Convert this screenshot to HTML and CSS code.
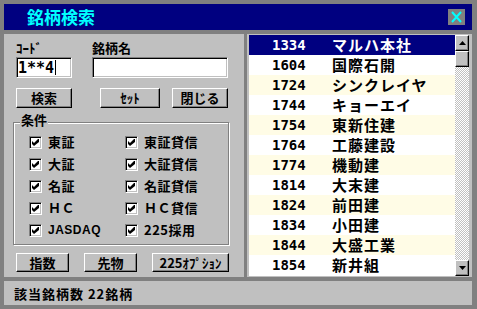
FILE: index.html
```
<!DOCTYPE html>
<html lang="ja">
<head>
<meta charset="utf-8">
<title>銘柄検索</title>
<link rel="stylesheet" href="styles.css">
</head>
<body>
<div class="window">
  <div class="titlebar">
    <span class="title">銘柄検索</span>
    <span class="close"><svg width="17" height="16" viewBox="0 0 17 16"><path d="M4 3L13 13M13 3L4 13" stroke="#00ffff" stroke-width="2" fill="none"/></svg></span>
  </div>
  <div class="body">
    <div class="left">
      <div class="fields">
        <div class="field code-field">
          <div class="label">ｺｰﾄﾞ</div>
          <div class="input"><span class="val">1**4</span><span class="caret"></span></div>
        </div>
        <div class="field name-field">
          <div class="label">銘柄名</div>
          <div class="input"></div>
        </div>
      </div>
      <div class="btnrow top-btns">
        <div class="btn b-search">検索</div>
        <div class="btn b-set">ｾｯﾄ</div>
        <div class="btn b-close">閉じる</div>
      </div>
      <div class="group">
        <div class="legend">条件</div>
        <div class="checks">
          <div class="chk"><span class="box"><svg width="7" height="7" viewBox="0 0 7 7"><path d="M0 2L2 4L6 0L7 0L7 3L2 7L0 5Z" fill="#000"/></svg></span>東証</div>
          <div class="chk"><span class="box"><svg width="7" height="7" viewBox="0 0 7 7"><path d="M0 2L2 4L6 0L7 0L7 3L2 7L0 5Z" fill="#000"/></svg></span>東証貸信</div>
          <div class="chk"><span class="box"><svg width="7" height="7" viewBox="0 0 7 7"><path d="M0 2L2 4L6 0L7 0L7 3L2 7L0 5Z" fill="#000"/></svg></span>大証</div>
          <div class="chk"><span class="box"><svg width="7" height="7" viewBox="0 0 7 7"><path d="M0 2L2 4L6 0L7 0L7 3L2 7L0 5Z" fill="#000"/></svg></span>大証貸信</div>
          <div class="chk"><span class="box"><svg width="7" height="7" viewBox="0 0 7 7"><path d="M0 2L2 4L6 0L7 0L7 3L2 7L0 5Z" fill="#000"/></svg></span>名証</div>
          <div class="chk"><span class="box"><svg width="7" height="7" viewBox="0 0 7 7"><path d="M0 2L2 4L6 0L7 0L7 3L2 7L0 5Z" fill="#000"/></svg></span>名証貸信</div>
          <div class="chk"><span class="box"><svg width="7" height="7" viewBox="0 0 7 7"><path d="M0 2L2 4L6 0L7 0L7 3L2 7L0 5Z" fill="#000"/></svg></span>ＨＣ</div>
          <div class="chk"><span class="box"><svg width="7" height="7" viewBox="0 0 7 7"><path d="M0 2L2 4L6 0L7 0L7 3L2 7L0 5Z" fill="#000"/></svg></span>ＨＣ貸信</div>
          <div class="chk"><span class="box"><svg width="7" height="7" viewBox="0 0 7 7"><path d="M0 2L2 4L6 0L7 0L7 3L2 7L0 5Z" fill="#000"/></svg></span><span class="latin">JASDAQ</span></div>
          <div class="chk"><span class="box"><svg width="7" height="7" viewBox="0 0 7 7"><path d="M0 2L2 4L6 0L7 0L7 3L2 7L0 5Z" fill="#000"/></svg></span>225採用</div>
        </div>
      </div>
      <div class="btnrow bottom-btns">
        <div class="btn b-idx">指数</div>
        <div class="btn b-fut">先物</div>
        <div class="btn b-opt">225ｵﾌﾟｼｮﾝ</div>
      </div>
    </div>
    <div class="right">
      <div class="listbox">
        <div class="list">
          <div class="row sel"><span class="c">1334</span><span class="n">マルハ本社</span></div>
          <div class="row"><span class="c">1604</span><span class="n">国際石開</span></div>
          <div class="row alt"><span class="c">1724</span><span class="n">シンクレイヤ</span></div>
          <div class="row"><span class="c">1744</span><span class="n">キョーエイ</span></div>
          <div class="row alt"><span class="c">1754</span><span class="n">東新住建</span></div>
          <div class="row"><span class="c">1764</span><span class="n">工藤建設</span></div>
          <div class="row alt"><span class="c">1774</span><span class="n">機動建</span></div>
          <div class="row"><span class="c">1814</span><span class="n">大末建</span></div>
          <div class="row alt"><span class="c">1824</span><span class="n">前田建</span></div>
          <div class="row"><span class="c">1834</span><span class="n">小田建</span></div>
          <div class="row alt"><span class="c">1844</span><span class="n">大盛工業</span></div>
          <div class="row"><span class="c">1854</span><span class="n">新井組</span></div>
        </div>
        <div class="scrollbar">
          <div class="sbtn"><svg width="7" height="4" viewBox="0 0 7 4"><path d="M3.5 0L7 4L0 4Z" fill="#000"/></svg></div>
          <div class="sbtn thumb"></div>
          <div class="track"></div>
          <div class="sbtn"><svg width="7" height="4" viewBox="0 0 7 4"><path d="M0 0L7 0L3.5 4Z" fill="#000"/></svg></div>
        </div>
      </div>
    </div>
  </div>
  <div class="status">該当銘柄数 22銘柄</div>
</div>
</body>
</html>
```
FILE: styles.css
```
* { box-sizing: border-box; margin: 0; padding: 0; }
html, body { width: 477px; height: 309px; overflow: hidden; background: #808080; }
body {
  font-family: "Noto Sans CJK JP", "Liberation Sans", sans-serif;
  font-weight: 700;
  color: #000;
}
.window {
  width: 477px;
  height: 309px;
  background: #808080;
  padding: 4px 5px 4px 4px;
  display: flex;
  flex-direction: column;
}
.titlebar {
  height: 26px;
  background: #000080;
  display: flex;
  align-items: center;
  justify-content: space-between;
  padding: 0 7px 0 23px;
}
.title { color: #00ffff; font-size: 17px; line-height: 20px; }
.close { width: 17px; height: 16px; background: #808080; display: block; }
.close svg { display: block; }

.body { margin-top: 4px; height: 243px; display: flex; }
.left { width: 240px; background: #c0c0c0; padding: 6px 0 0 12px; }

.fields { display: flex; gap: 20px; }
.code-field { width: 56px; }
.name-field { width: 136px; }
.label { font-size: 13px; line-height: 16px; margin-bottom: 1px; }
.input {
  height: 21px;
  background: #fff;
  border: 1px solid;
  border-color: #808080 #fff #fff #808080;
  box-shadow: inset 1px 1px #000, inset -1px -1px #c0c0c0;
  display: flex;
  align-items: center;
  padding-left: 1px;
}
.val { font-family: "DejaVu Sans Mono", monospace; font-size: 15px; line-height: 16px; }
.caret { width: 1px; height: 15px; background: #000; margin-left: 1px; }

.btnrow { display: flex; }
.top-btns { margin-top: 10px; }
.btn {
  height: 20px;
  background: #c0c0c0;
  border: 1px solid;
  border-color: #fff #000 #000 #fff;
  box-shadow: inset -1px -1px #808080;
  display: flex;
  align-items: center;
  justify-content: center;
  font-size: 13px;
  line-height: 16px;
}
.b-search { width: 56px; }
.b-set { width: 60px; margin-left: 28px; }
.b-close { width: 56px; margin-left: 12px; }

.group {
  margin: 14px 0 0 -3px;
  width: 216px;
  height: 123px;
  border: 1px solid #808080;
  box-shadow: inset 1px 1px #fff, 1px 1px #fff;
}
.legend {
  margin: -10px 0 0 6px;
  width: fit-content;
  padding: 0 1px;
  background: #c0c0c0;
  font-size: 13px;
  line-height: 14px;
}
.checks {
  margin-top: 4px;
  padding-left: 15px;
  display: grid;
  grid-template-columns: 96px auto;
  grid-auto-rows: 22px;
}
.chk { display: flex; align-items: center; gap: 6px; font-size: 13px; line-height: 16px; letter-spacing: 0.5px; }
.latin { font-family: "Liberation Sans", sans-serif; font-size: 12px; }
.box {
  width: 13px;
  height: 13px;
  flex: none;
  background: #fff;
  border: 1px solid;
  border-color: #808080 #fff #fff #808080;
  box-shadow: inset 1px 1px #000, inset -1px -1px #c0c0c0;
  display: flex;
  align-items: center;
  justify-content: center;
}
.box svg { display: block; }

.bottom-btns { margin-top: 8px; }
.bottom-btns .btn { height: 19px; }
.b-idx { width: 53px; }
.b-fut { width: 53px; margin-left: 15px; }
.b-opt { width: 77px; margin-left: 15px; }

.right {
  margin-left: 3px;
  width: 225px;
  background: #c0c0c0;
  padding: 1px 3px 1px 2px;
}
.listbox { display: flex; height: 241px; }
.list { width: 206px; background: #fff; overflow: hidden; }
.row {
  height: 20px;
  display: flex;
  align-items: center;
  padding-left: 23px;
  background: #fff;
}
.row.alt { background: #fffce6; }
.row.sel { background: #000080; color: #fff; }
.c { width: 60px; font-family: "DejaVu Sans Mono", monospace; font-size: 14px; line-height: 16px; }
.n { font-size: 15px; line-height: 18px; letter-spacing: 1px; }

.scrollbar { width: 14px; display: flex; flex-direction: column; }
.sbtn {
  height: 16px;
  flex: none;
  background: #c0c0c0;
  border: 1px solid;
  border-color: #fff #000 #000 #fff;
  box-shadow: inset -1px -1px #808080;
  display: flex;
  align-items: center;
  justify-content: center;
}
.sbtn svg { display: block; }
.track {
  flex: 1;
  background: repeating-conic-gradient(#c0c0c0 0 25%, #fff 0 50%) 0 0 / 2px 2px;
}

.status {
  margin-top: 4px;
  height: 24px;
  background: #c0c0c0;
  padding-left: 10px;
  display: flex;
  align-items: center;
  font-size: 13px;
  letter-spacing: 1px;
}
```
